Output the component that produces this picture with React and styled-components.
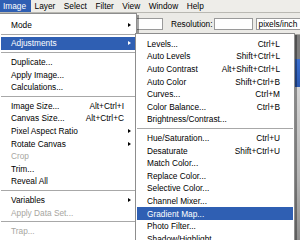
import styled, { createGlobalStyle } from "styled-components";

const GlobalStyle = createGlobalStyle`
  html, body {
    margin: 0;
    padding: 0;
    overflow: hidden;
    background: #808080;
  }
  * {
    box-sizing: border-box;
  }
`;

const Window = styled.div`
  position: relative;
  width: 300px;
  height: 240px;
  overflow: hidden;
  display: flex;
  flex-direction: column;
  font-family: "Liberation Sans", Arial, sans-serif;
  font-size: 8.3px;
  color: #000;
  background: #ebeae6;
`;

const MenuBar = styled.div`
  display: flex;
  height: 13px;
  align-items: stretch;
  background: #eeede9;
  border-bottom: 1px solid #b9b8b2;
`;

const MenuTitle = styled.div`
  display: flex;
  align-items: center;
  padding: 0 4.5px 0 ${(p) => (p.$open ? 3 : 4)}px;
  background: ${(p) => (p.$open ? "#2f5fb3" : "transparent")};
  color: ${(p) => (p.$open ? "#fff" : "#000")};
`;

const OptionsBar = styled.div`
  display: flex;
  align-items: center;
  height: 22px;
  background: #ebeae6;
  border-bottom: 1px solid #a9a8a2;

  & > * {
    flex: none;
  }
`;

const LeadFields = styled.div`
  display: flex;
  align-items: center;
  justify-content: flex-end;
  gap: 6px;
  width: 163px;
`;

const Label = styled.span`
  margin-left: ${(p) => p.$gap || 0}px;
  margin-right: 1px;
`;

const Field = styled.div`
  width: ${(p) => p.$w}px;
  height: 12px;
  background: #fff;
  border: 1px solid #9a9a9a;
  margin-right: ${(p) => p.$after || 0}px;
  display: flex;
  align-items: center;
  padding-left: 2px;
  white-space: nowrap;
`;

const Workspace = styled.div`
  flex: 1;
  display: flex;
  padding: 24px 0 0 200px;
  background: #7d7d7d;
`;

const DocWindow = styled.div`
  flex: 1;
  display: flex;
  flex-direction: column;
  border-left: 2px solid #3a3a3a;
`;

const DocTitle = styled.div`
  height: 28px;
  background: linear-gradient(#3b6fd0, #2a58b0);
`;

const DocCanvas = styled.div`
  flex: 1;
  background: linear-gradient(#d6d6d6, #b4b4b4 60%, #8e8e8e);
`;

const Menu = styled.div`
  position: absolute;
  top: ${(p) => p.$top}px;
  left: ${(p) => p.$left}px;
  width: ${(p) => p.$w}px;
  background: #fff;
  border: 1px solid #8d8d8d;
  padding: ${(p) => p.$padTop}px 1px 4px;
  box-shadow: 2px 2px 0 rgba(0, 0, 0, 0.35);
`;

const Item = styled.div`
  display: grid;
  grid-template-columns: 1fr auto ${(p) => p.$tail}px;
  align-items: center;
  height: 12.6px;
  padding-left: 10px;
  white-space: nowrap;
  background: ${(p) => (p.$active ? "#2f5fb3" : "transparent")};
  color: ${(p) => (p.$active ? "#fff" : p.$disabled ? "#a7a69f" : "#000")};
`;

const Shortcut = styled.span`
  text-align: right;
`;

const Arrow = styled.span`
  justify-self: center;
  width: 0;
  height: 0;
  border-top: 2.5px solid transparent;
  border-bottom: 2.5px solid transparent;
  border-left: 3px solid ${(p) => (p.$active ? "#fff" : "#000")};
`;

const Separator = styled.div`
  height: 6px;
  display: flex;
  align-items: center;

  &::after {
    content: "";
    flex: 1;
    height: 1px;
    background: #a8a8a8;
  }
`;

const menuTitles = ["Image", "Layer", "Select", "Filter", "View", "Window", "Help"];

const imageMenu = [
  { label: "Mode", sub: true },
  "-",
  { label: "Adjustments", sub: true, active: true },
  "-",
  { label: "Duplicate..." },
  { label: "Apply Image..." },
  { label: "Calculations..." },
  "-",
  { label: "Image Size...", key: "Alt+Ctrl+I" },
  { label: "Canvas Size...", key: "Alt+Ctrl+C" },
  { label: "Pixel Aspect Ratio", sub: true },
  { label: "Rotate Canvas", sub: true },
  { label: "Crop", disabled: true },
  { label: "Trim..." },
  { label: "Reveal All" },
  "-",
  { label: "Variables", sub: true },
  { label: "Apply Data Set...", disabled: true },
  "-",
  { label: "Trap...", disabled: true },
];

const adjustMenu = [
  { label: "Levels...", key: "Ctrl+L" },
  { label: "Auto Levels", key: "Shift+Ctrl+L" },
  { label: "Auto Contrast", key: "Alt+Shift+Ctrl+L" },
  { label: "Auto Color", key: "Shift+Ctrl+B" },
  { label: "Curves...", key: "Ctrl+M" },
  { label: "Color Balance...", key: "Ctrl+B" },
  { label: "Brightness/Contrast..." },
  "-",
  { label: "Hue/Saturation...", key: "Ctrl+U" },
  { label: "Desaturate", key: "Shift+Ctrl+U" },
  { label: "Match Color..." },
  { label: "Replace Color..." },
  { label: "Selective Color..." },
  { label: "Channel Mixer..." },
  { label: "Gradient Map...", active: true },
  { label: "Photo Filter..." },
  { label: "Shadow/Highlight..." },
];

const renderItems = (items, tail) =>
  items.map((it, i) =>
    it === "-" ? (
      <Separator key={i} />
    ) : (
      <Item key={i} $tail={tail} $active={it.active} $disabled={it.disabled}>
        <span>{it.label}</span>
        <Shortcut>{it.key}</Shortcut>
        {it.sub ? <Arrow $active={it.active} /> : <span />}
      </Item>
    )
  );

const App = () => {
  return (
    <>
      <GlobalStyle />
      <Window>
        <MenuBar>
          {menuTitles.map((t, i) => (
            <MenuTitle key={t} $open={i === 0}>
              {t}
            </MenuTitle>
          ))}
        </MenuBar>

        <OptionsBar>
          <LeadFields>
            <Field $w={40} />
            <Field $w={40} />
          </LeadFields>
          <Label $gap={8}>Resolution:</Label>
          <Field $w={39} $after={3} />
          <Field $w={60}>pixels/inch</Field>
        </OptionsBar>

        <Workspace>
          <DocWindow>
            <DocTitle />
            <DocCanvas />
          </DocWindow>
        </Workspace>

        <Menu $top={13} $left={-1} $w={138} $padTop={4.5}>
          {renderItems(imageMenu, 11)}
        </Menu>

        <Menu $top={33} $left={135} $w={160} $padTop={3.6}>
          {renderItems(adjustMenu, 13)}
        </Menu>
      </Window>
    </>
  );
};

export default App;
